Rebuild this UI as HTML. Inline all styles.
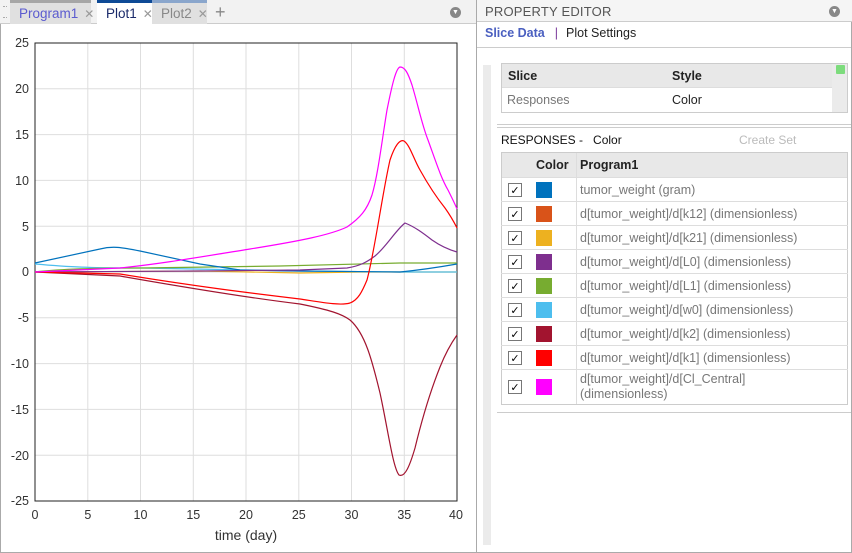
<!DOCTYPE html>
<html><head><style>
*{margin:0;padding:0;box-sizing:border-box}
body{width:852px;height:553px;position:relative;background:#fff;font-family:"Liberation Sans",Arial,sans-serif;overflow:hidden}
.abs{position:absolute}
.tab{position:absolute;top:3px;height:20px;font-size:13.5px;line-height:19px;padding-left:9px}
.x{color:#999;font-size:12px;margin-left:6px}
.row{position:absolute;left:501px;width:347px;height:24px;border-bottom:1px solid #ddd;font-size:12.5px;color:#777}
.cb{position:absolute;left:7px;top:5px;width:14px;height:14px;border:1px solid #777;background:#fff;font-size:11px;line-height:13px;text-align:center;color:#000;font-family:"DejaVu Sans",sans-serif}
.sw{position:absolute;left:35px;top:4px;width:16px;height:16px}
.lbl{position:absolute;left:79px;top:5px;white-space:nowrap}
.vl{position:absolute;left:75px;top:0;bottom:0;border-left:1px solid #ddd}
</style></head><body>
<div class="abs" style="left:0;top:0;width:477px;height:24px;background:#f2f2f2;border-bottom:1px solid #ccc"></div>
<div class="abs" style="left:3px;top:6px;width:4px;height:12px;border-top:1px dotted #aaa;border-bottom:1px dotted #aaa"></div>
<div class="tab" style="left:10px;width:81px;background:#e0e0e0;border-top:3px solid #a6a6a6;top:0;height:24px;color:#5b5bcf;line-height:22px">Program1<span class="x">✕</span></div>
<div class="tab" style="left:97px;width:55px;background:#fff;border-top:3px solid #0e4a96;top:0;height:25px;color:#1a2a6a;line-height:22px">Plot1<span class="x">✕</span></div>
<div class="tab" style="left:152px;width:55px;background:#e0e0e0;border-top:3px solid #8aa6cc;top:0;height:24px;color:#888;line-height:22px">Plot2<span class="x">✕</span></div>
<div class="abs" style="left:215px;top:2px;font-size:18px;color:#888">+</div>
<div class="abs" style="left:450px;top:7px;width:11px;height:11px;border-radius:50%;background:#888;color:#fff;font-size:7px;text-align:center;line-height:11px">▼</div>
<div class="abs" style="left:476px;top:0;width:1px;height:553px;background:#aaa"></div>
<div class="abs" style="left:0;top:24px;width:1px;height:529px;background:#aaa"></div>
<div class="abs" style="left:0;top:552px;width:852px;height:1px;background:#aaa"></div>

<svg class="abs" style="left:0;top:0" width="476" height="553" font-family="Liberation Sans,Arial,sans-serif" font-size="12.5">
<g stroke="#dedede" stroke-width="1">
<line x1="87.8" y1="43" x2="87.8" y2="501"/><line x1="140.5" y1="43" x2="140.5" y2="501"/><line x1="193.3" y1="43" x2="193.3" y2="501"/><line x1="246" y1="43" x2="246" y2="501"/><line x1="298.8" y1="43" x2="298.8" y2="501"/><line x1="351.5" y1="43" x2="351.5" y2="501"/><line x1="404.3" y1="43" x2="404.3" y2="501"/>
<line x1="35" y1="88.8" x2="457" y2="88.8"/><line x1="35" y1="134.6" x2="457" y2="134.6"/><line x1="35" y1="180.4" x2="457" y2="180.4"/><line x1="35" y1="226.2" x2="457" y2="226.2"/><line x1="35" y1="272" x2="457" y2="272"/><line x1="35" y1="317.8" x2="457" y2="317.8"/><line x1="35" y1="363.6" x2="457" y2="363.6"/><line x1="35" y1="409.4" x2="457" y2="409.4"/><line x1="35" y1="455.2" x2="457" y2="455.2"/>
</g>
<rect x="35" y="43" width="422" height="458" fill="none" stroke="#222" stroke-width="1"/>
<g fill="#333" text-anchor="end">
<text x="29" y="47">25</text><text x="29" y="93">20</text><text x="29" y="139">15</text><text x="29" y="185">10</text><text x="29" y="231">5</text><text x="29" y="276">0</text><text x="29" y="322">-5</text><text x="29" y="368">-10</text><text x="29" y="414">-15</text><text x="29" y="460">-20</text><text x="29" y="505">-25</text>
</g>
<g fill="#333" text-anchor="middle">
<text x="35" y="519">0</text><text x="87.8" y="519">5</text><text x="140.5" y="519">10</text><text x="193.3" y="519">15</text><text x="246" y="519">20</text><text x="298.8" y="519">25</text><text x="351.5" y="519">30</text><text x="404.3" y="519">35</text><text x="456" y="519">40</text>
<text x="246" y="540" font-size="14">time (day)</text>
</g>
<g fill="none" stroke-width="1.2">
<path stroke="#edb120" d="M35,272 L200,271 L300,273 L360,272 L457,272"/>
<path stroke="#4dbeee" d="M35,264 C70,267 90,268 140,268 L300,271 L400,272 L457,272"/>
<path stroke="#77ac30" d="M35,272 C60,269 90,268 140,268 L280,266 L400,263 L457,263"/>
<path stroke="#0072bd" d="M35,263 L100,249 C112,246 120,247 140,251 L200,264 L240,270 L300,271 L400,272 C420,270 440,267 457,264"/>
<path stroke="#7e2f8e" d="M35,272 L200,271 L300,270 L347,268 C360,266 367,262 375,256 C387,246 395,231 405,223 C415,227 423,233 432,240 C442,247 450,250 457,252"/>
<path stroke="#a2142f" d="M35,272 L120,276 C200,290 250,298 300,304 C330,310 342,314 350,320 C365,333 372,360 380,393 C388,430 393,468 399,475 C405,478 410,465 415,448 C423,415 432,387 440,367 C446,352 452,342 457,335"/>
<path stroke="#ff0000" d="M35,272 L120,274 C200,287 250,293 300,299 C320,302 340,306 350,303 C358,300 362,292 367,280 C375,250 382,195 390,160 C395,145 400,139 404,141 C410,145 414,160 420,170 C430,188 437,198 445,208 C450,215 454,222 457,228"/>
<path stroke="#ff00ff" d="M35,272 L120,268 C160,264 200,257 250,249 C300,241 330,235 347,227 C360,218 367,210 372,195 C378,175 382,140 387,110 C392,85 396,68 400,67 C405,67 408,73 412,85 C418,105 422,125 428,140 C436,162 441,178 448,190 C452,198 455,204 457,209"/>
</g>
</svg>

<div class="abs" style="left:477px;top:0;width:375px;height:22px;background:#f5f5f5;border-bottom:1px solid #ccc;font-size:13px;color:#555;padding:4px 0 0 8px;letter-spacing:0.2px">PROPERTY EDITOR</div>
<div class="abs" style="left:829px;top:6px;width:11px;height:11px;border-radius:50%;background:#888;color:#fff;font-size:7px;text-align:center;line-height:11px">▼</div>
<div class="abs" style="left:477px;top:23px;width:375px;height:25px;border-bottom:1px solid #ccc;font-size:12.5px;padding:3px 0 0 8px">
<span style="color:#4a5fc0;font-weight:bold">Slice Data</span><span style="color:#7a3a9a;margin:0 8px 0 10px">|</span><span style="color:#222">Plot Settings</span></div>
<div class="abs" style="left:483px;top:65px;width:8px;height:480px;background:#ebebeb"></div>
<div class="abs" style="left:501px;top:63px;width:347px;height:50px;border:1px solid #ccc;background:#ebebeb"></div>
<div class="abs" style="left:502px;top:64px;width:330px;height:24px;background:#e8e8e8;border-bottom:1px solid #ddd;font-size:12.5px;font-weight:bold;color:#222">
<span class="abs" style="left:6px;top:5px">Slice</span><span class="abs" style="left:170px;top:5px">Style</span></div>
<div class="abs" style="left:502px;top:88px;width:330px;height:24px;background:#fff;font-size:12.5px">
<span class="abs" style="left:5px;top:5px;color:#777">Responses</span><span class="abs" style="left:170px;top:5px;color:#222">Color</span></div>
<div class="abs" style="left:836px;top:65px;width:9px;height:9px;background:#7ddc7d;border-radius:1px"></div>
<div class="abs" style="left:497px;top:124px;width:355px;height:1px;background:#ccc"></div>
<div class="abs" style="left:497px;top:127px;width:355px;height:1px;background:#ccc"></div>
<div class="abs" style="left:501px;top:133px;font-size:12px;color:#111">RESPONSES -&nbsp;&nbsp; Color</div>
<div class="abs" style="left:739px;top:133px;font-size:12px;color:#bbb">Create Set</div>
<div class="abs" style="left:501px;top:152px;width:347px;height:253px;border:1px solid #ccc;background:#fff"></div>
<div class="abs" style="left:502px;top:153px;width:345px;height:25px;background:#e8e8e8;border-bottom:1px solid #ddd;font-size:12.5px;font-weight:bold;color:#222">
<span class="abs" style="left:34px;top:5px">Color</span><span class="abs" style="left:78px;top:5px">Program1</span><span class="abs" style="left:74px;top:0;bottom:0;border-left:1px solid #ddd"></span></div>
<div class="row" style="top:178px"><div class="cb">✓</div><div class="sw" style="background:#0072bd"></div><div class="vl"></div><div class="lbl">tumor_weight (gram)</div></div>
<div class="row" style="top:202px"><div class="cb">✓</div><div class="sw" style="background:#d95319"></div><div class="vl"></div><div class="lbl">d[tumor_weight]/d[k12] (dimensionless)</div></div>
<div class="row" style="top:226px"><div class="cb">✓</div><div class="sw" style="background:#edb120"></div><div class="vl"></div><div class="lbl">d[tumor_weight]/d[k21] (dimensionless)</div></div>
<div class="row" style="top:250px"><div class="cb">✓</div><div class="sw" style="background:#7e2f8e"></div><div class="vl"></div><div class="lbl">d[tumor_weight]/d[L0] (dimensionless)</div></div>
<div class="row" style="top:274px"><div class="cb">✓</div><div class="sw" style="background:#77ac30"></div><div class="vl"></div><div class="lbl">d[tumor_weight]/d[L1] (dimensionless)</div></div>
<div class="row" style="top:298px"><div class="cb">✓</div><div class="sw" style="background:#4dbeee"></div><div class="vl"></div><div class="lbl">d[tumor_weight]/d[w0] (dimensionless)</div></div>
<div class="row" style="top:322px"><div class="cb">✓</div><div class="sw" style="background:#a2142f"></div><div class="vl"></div><div class="lbl">d[tumor_weight]/d[k2] (dimensionless)</div></div>
<div class="row" style="top:346px"><div class="cb">✓</div><div class="sw" style="background:#ff0000"></div><div class="vl"></div><div class="lbl">d[tumor_weight]/d[k1] (dimensionless)</div></div>
<div class="row" style="top:370px;height:34px;border-bottom:none"><div class="cb" style="top:10px">✓</div><div class="sw" style="background:#ff00ff;top:9px"></div><div class="vl"></div><div class="lbl" style="top:2px;line-height:15px">d[tumor_weight]/d[Cl_Central]<br>(dimensionless)</div></div>
<div class="abs" style="left:497px;top:412px;width:355px;height:1px;background:#ccc"></div>
<div class="abs" style="left:851px;top:22px;width:1px;height:531px;background:#aaa"></div>
</body></html>
